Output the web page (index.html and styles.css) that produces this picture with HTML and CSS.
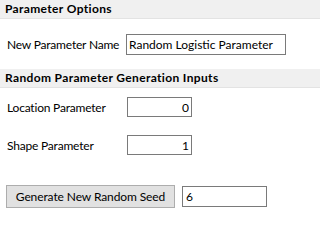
FILE: index.html
```html
<!DOCTYPE html>
<html>
<head>
<meta charset="utf-8">
<link rel="stylesheet" href="styles.css">
</head>
<body>
<div class="panel">
  <div class="header">Parameter Options</div>
  <div class="row row-name">
    <span class="label label-name">New Parameter Name</span>
    <input class="field field-name" type="text" value="Random Logistic Parameter">
  </div>
  <div class="header header-gen">Random Parameter Generation Inputs</div>
  <div class="row row-loc">
    <span class="label label-num">Location Parameter</span>
    <input class="field field-num" type="text" value="0">
  </div>
  <div class="row row-shape">
    <span class="label label-num">Shape Parameter</span>
    <input class="field field-num" type="text" value="1">
  </div>
  <div class="row row-seed">
    <button class="btn" type="button">Generate New Random Seed</button>
    <input class="field field-seed" type="text" value="6">
  </div>
</div>
</body>
</html>
```

FILE: styles.css
```css
html, body {
  margin: 0;
  padding: 0;
  background: #ffffff;
}
body {
  overflow: hidden;
  font-family: Lato, "Open Sans", sans-serif;
  font-size: 12px;
  color: #000000;
}
.panel {
  display: flex;
  flex-direction: column;
}
.header {
  height: 18px;
  line-height: 18px;
  background: #f0f0f0;
  border-bottom: 1px solid #e3e3e3;
  padding-left: 5px;
  font-weight: bold;
  letter-spacing: 0.35px;
}
.header-gen {
  margin-top: 14px;
}
.row {
  display: flex;
  align-items: center;
  padding-left: 7px;
}
.label {
  letter-spacing: -0.2px;
}
.label-name {
  width: 119px;
}
.label-num {
  width: 120px;
}
.row-name {
  margin-top: 15px;
}
.row-loc {
  margin-top: 9px;
}
.row-shape {
  margin-top: 18px;
}
.row-seed {
  margin-top: 30px;
  padding-left: 6px;
}
.field {
  box-sizing: border-box;
  border: 1px solid #7a7a7a;
  background: #ffffff;
  font-family: inherit;
  font-size: 12px;
  color: #000000;
  margin: 0;
  outline: none;
}
.field-name {
  width: 160px;
  height: 21px;
  padding: 0 0 0 2px;
}
.field-num {
  width: 65px;
  height: 20px;
  text-align: right;
  padding: 0 2px 0 0;
}
.field-seed {
  width: 85px;
  height: 21px;
  margin-left: 7px;
  padding: 0 0 0 3px;
}
.btn {
  box-sizing: border-box;
  width: 169px;
  height: 23px;
  margin: 0;
  padding: 0;
  background: #e1e1e1;
  border: 1px solid #adadad;
  border-radius: 0;
  font-family: inherit;
  font-size: 12px;
  color: #000000;
  letter-spacing: -0.1px;
}
```
